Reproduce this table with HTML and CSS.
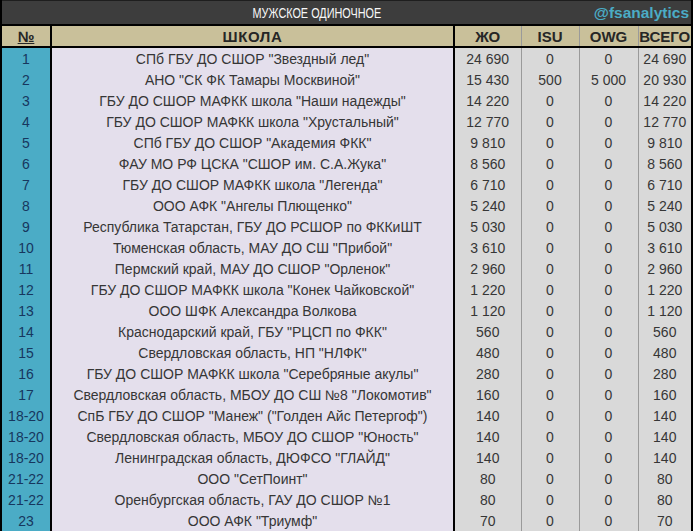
FILE: index.html
```html
<!DOCTYPE html>
<html>
<head>
<meta charset="utf-8">
<link rel="stylesheet" href="styles.css">
</head>
<body>
<table class="board">
  <colgroup>
    <col class="c-no"><col class="c-school"><col class="c-zho"><col class="c-isu"><col class="c-owg"><col class="c-total">
  </colgroup>
  <thead>
    <tr class="title-row">
      <th colspan="4" class="title"><span class="title-text">МУЖСКОЕ ОДИНОЧНОЕ</span></th>
      <th colspan="2" class="brand">@fsanalytics</th>
    </tr>
    <tr class="head-row">
      <th class="no">№</th><th class="school">ШКОЛА</th><th class="num first">ЖО</th><th class="num">ISU</th><th class="num">OWG</th><th class="num last">ВСЕГО</th>
    </tr>
  </thead>
  <tbody>
    <tr><td class="no">1</td><td class="school">СПб ГБУ ДО СШОР "Звездный лед"</td><td class="num first">24 690</td><td class="num">0</td><td class="num">0</td><td class="num last">24 690</td></tr>
    <tr><td class="no">2</td><td class="school">АНО "СК ФК Тамары Москвиной"</td><td class="num first">15 430</td><td class="num">500</td><td class="num">5 000</td><td class="num last">20 930</td></tr>
    <tr><td class="no">3</td><td class="school">ГБУ ДО СШОР МАФКК школа "Наши надежды"</td><td class="num first">14 220</td><td class="num">0</td><td class="num">0</td><td class="num last">14 220</td></tr>
    <tr><td class="no">4</td><td class="school">ГБУ ДО СШОР МАФКК школа "Хрустальный"</td><td class="num first">12 770</td><td class="num">0</td><td class="num">0</td><td class="num last">12 770</td></tr>
    <tr><td class="no">5</td><td class="school">СПб ГБУ ДО СШОР "Академия ФКК"</td><td class="num first">9 810</td><td class="num">0</td><td class="num">0</td><td class="num last">9 810</td></tr>
    <tr><td class="no">6</td><td class="school">ФАУ МО РФ ЦСКА "СШОР им. С.А.Жука"</td><td class="num first">8 560</td><td class="num">0</td><td class="num">0</td><td class="num last">8 560</td></tr>
    <tr><td class="no">7</td><td class="school">ГБУ ДО СШОР МАФКК школа "Легенда"</td><td class="num first">6 710</td><td class="num">0</td><td class="num">0</td><td class="num last">6 710</td></tr>
    <tr><td class="no">8</td><td class="school">ООО АФК "Ангелы Плющенко"</td><td class="num first">5 240</td><td class="num">0</td><td class="num">0</td><td class="num last">5 240</td></tr>
    <tr><td class="no">9</td><td class="school">Республика Татарстан, ГБУ ДО РСШОР по ФККиШТ</td><td class="num first">5 030</td><td class="num">0</td><td class="num">0</td><td class="num last">5 030</td></tr>
    <tr><td class="no">10</td><td class="school">Тюменская область, МАУ ДО СШ "Прибой"</td><td class="num first">3 610</td><td class="num">0</td><td class="num">0</td><td class="num last">3 610</td></tr>
    <tr><td class="no">11</td><td class="school">Пермский край, МАУ ДО СШОР "Орленок"</td><td class="num first">2 960</td><td class="num">0</td><td class="num">0</td><td class="num last">2 960</td></tr>
    <tr><td class="no">12</td><td class="school">ГБУ ДО СШОР МАФКК школа "Конек Чайковской"</td><td class="num first">1 220</td><td class="num">0</td><td class="num">0</td><td class="num last">1 220</td></tr>
    <tr><td class="no">13</td><td class="school">ООО ШФК Александра Волкова</td><td class="num first">1 120</td><td class="num">0</td><td class="num">0</td><td class="num last">1 120</td></tr>
    <tr><td class="no">14</td><td class="school">Краснодарский край, ГБУ "РЦСП по ФКК"</td><td class="num first">560</td><td class="num">0</td><td class="num">0</td><td class="num last">560</td></tr>
    <tr><td class="no">15</td><td class="school">Свердловская область, НП "НЛФК"</td><td class="num first">480</td><td class="num">0</td><td class="num">0</td><td class="num last">480</td></tr>
    <tr><td class="no">16</td><td class="school">ГБУ ДО СШОР МАФКК школа "Серебряные акулы"</td><td class="num first">280</td><td class="num">0</td><td class="num">0</td><td class="num last">280</td></tr>
    <tr><td class="no">17</td><td class="school">Свердловская область, МБОУ ДО СШ №8 "Локомотив"</td><td class="num first">160</td><td class="num">0</td><td class="num">0</td><td class="num last">160</td></tr>
    <tr><td class="no">18-20</td><td class="school">СпБ ГБУ ДО СШОР "Манеж" ("Голден Айс Петергоф")</td><td class="num first">140</td><td class="num">0</td><td class="num">0</td><td class="num last">140</td></tr>
    <tr><td class="no">18-20</td><td class="school">Свердловская область, МБОУ ДО СШОР "Юность"</td><td class="num first">140</td><td class="num">0</td><td class="num">0</td><td class="num last">140</td></tr>
    <tr><td class="no">18-20</td><td class="school">Ленинградская область, ДЮФСО "ГЛАЙД"</td><td class="num first">140</td><td class="num">0</td><td class="num">0</td><td class="num last">140</td></tr>
    <tr><td class="no">21-22</td><td class="school">ООО "СетПоинт"</td><td class="num first">80</td><td class="num">0</td><td class="num">0</td><td class="num last">80</td></tr>
    <tr><td class="no">21-22</td><td class="school">Оренбургская область, ГАУ ДО СШОР №1</td><td class="num first">80</td><td class="num">0</td><td class="num">0</td><td class="num last">80</td></tr>
    <tr><td class="no">23</td><td class="school">ООО АФК "Триумф"</td><td class="num first">70</td><td class="num">0</td><td class="num">0</td><td class="num last">70</td></tr>
  </tbody>
</table>
</body>
</html>
```

FILE: styles.css
```css
html, body {
  margin: 0;
  padding: 0;
  background: #ffffff;
}
body {
  font-family: "Liberation Sans", Arial, sans-serif;
  font-size: 14px;
  color: #363636;
}
.board {
  border-collapse: collapse;
  table-layout: fixed;
  width: 691px;
  border-left: 2px solid #000;
  border-right: 2px solid #000;
}
.c-no { width: 50px; }
.c-school { width: 403px; }
.c-zho { width: 67px; }
.c-isu { width: 58px; }
.c-owg { width: 59px; }
.c-total { width: 54px; }

th, td {
  padding: 0;
  white-space: nowrap;
  overflow: hidden;
}
.title-row th {
  background: #3d3d3d;
  height: 23px;
  border-top: 1px solid #1e1e1e;
  border-bottom: 2px solid #000;
}
.title {
  color: #f7f7f7;
  font-weight: normal;
  font-size: 15.5px;
  text-align: center;
  padding-left: 52px;
}
.title-text {
  display: inline-block;
  transform: scaleX(0.7);
}
.brand {
  color: #4bacc6;
  font-weight: bold;
  font-size: 15.5px;
  text-align: right;
  padding-right: 2px;
}
.head-row th {
  background: #c9c09a;
  height: 20px;
  border-bottom: 2px solid #000;
  font-weight: bold;
  font-size: 15px;
  color: #262626;
  text-align: center;
}
.head-row .school {
  letter-spacing: 0.6px;
}
tbody td {
  height: 21px;
  text-align: center;
}
.no {
  border-right: 2px solid #000;
}
tbody .no {
  background: #4bacc6;
  color: #17375e;
}
.head-row .no {
  text-decoration: underline;
}
.school {
  border-right: 2px solid #000;
}
tbody .school {
  background: #e4dfec;
}
tbody .num {
  background: #d9d9d9;
}
.num {
  border-right: 1px solid #9a9a9a;
}
.num.last {
  border-right: none;
}
```
